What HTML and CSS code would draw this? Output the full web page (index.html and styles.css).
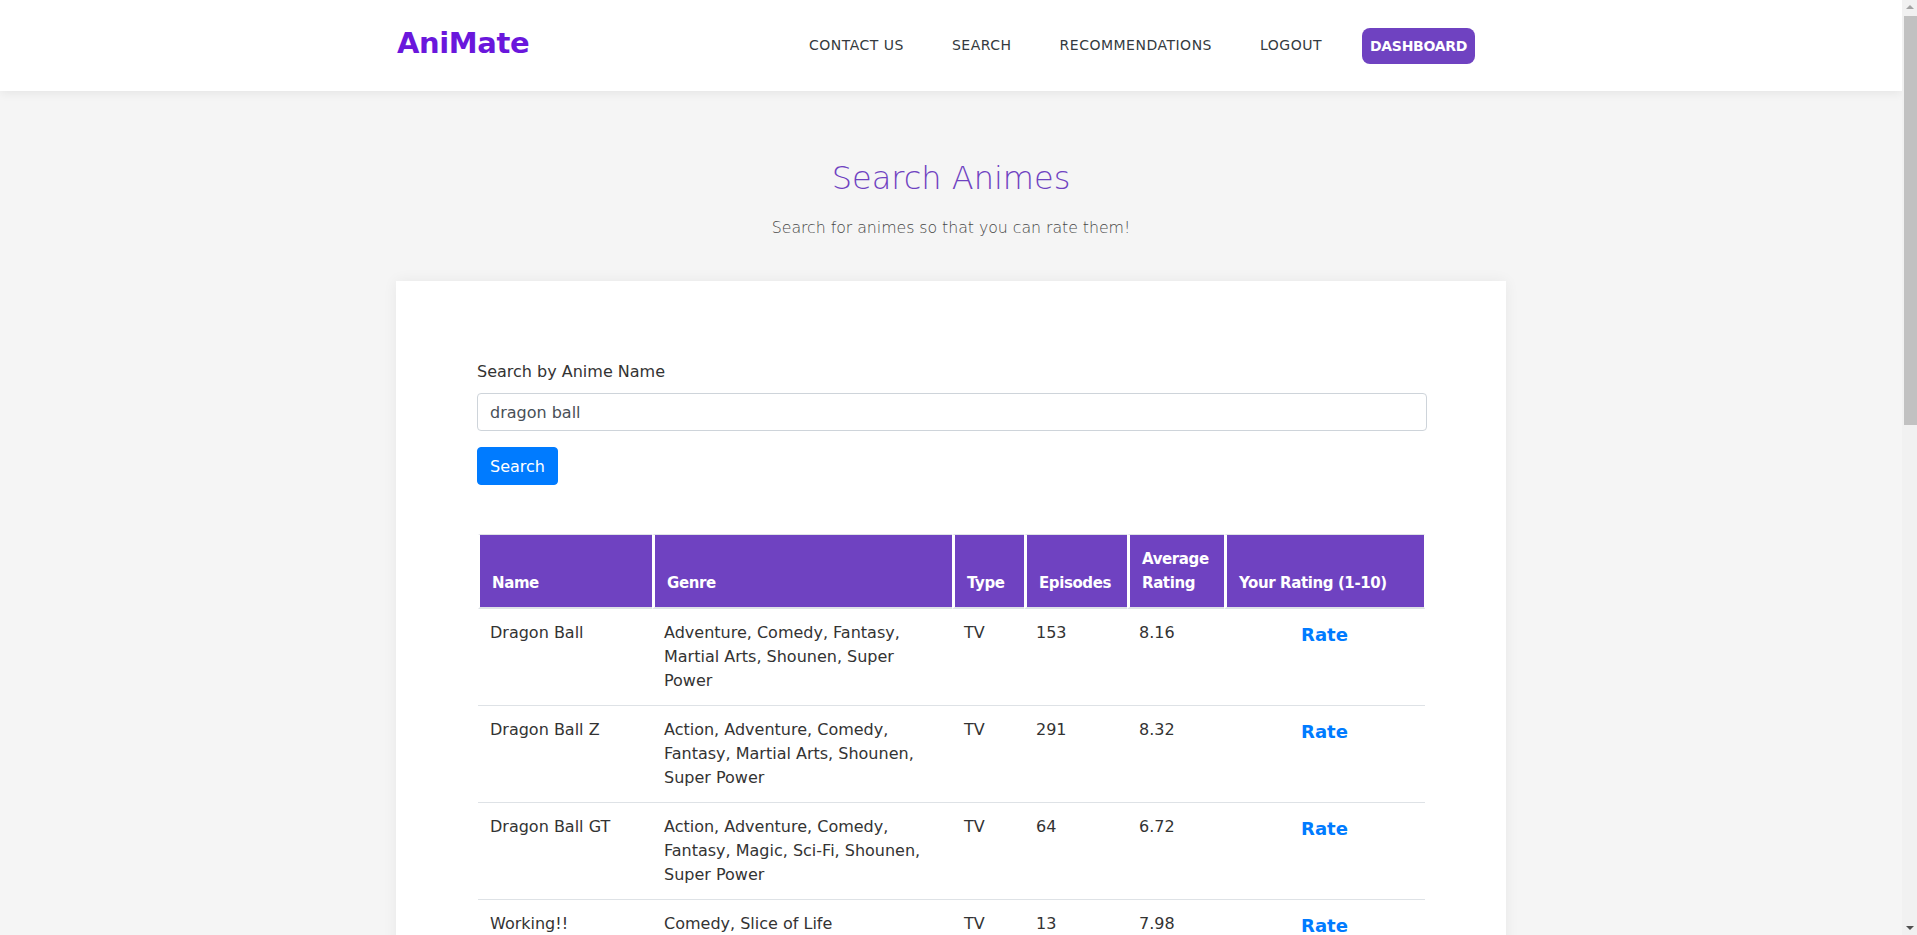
FILE: index.html
```html
<!DOCTYPE html>
<html lang="en">
<head>
<meta charset="utf-8">
<title>AniMate - Search Animes</title>
<link rel="stylesheet" href="styles.css">
</head>
<body>
<header class="topbar">
  <div class="container topbar-inner">
    <a class="brand" href="#">AniMate</a>
    <nav class="nav">
      <a class="nav-link" href="#">CONTACT US</a>
      <a class="nav-link" href="#">SEARCH</a>
      <a class="nav-link" href="#">RECOMMENDATIONS</a>
      <a class="nav-link" href="#">LOGOUT</a>
      <a class="nav-btn" href="#">DASHBOARD</a>
    </nav>
  </div>
</header>

<main class="container">
  <section class="hero">
    <h1 class="hero-title">Search Animes</h1>
    <p class="hero-sub">Search for animes so that you can rate them!</p>
  </section>

  <section class="card">
    <form class="search-form">
      <label class="form-label" for="q">Search by Anime Name</label>
      <input class="form-input" id="q" type="text" value="dragon ball">
      <button class="btn-primary" type="button">Search</button>
    </form>

    <table class="results">
      <thead>
        <tr>
          <th class="w-name">Name</th>
          <th class="w-genre">Genre</th>
          <th class="w-type">Type</th>
          <th class="w-eps">Episodes</th>
          <th class="w-avg">Average Rating</th>
          <th class="w-rate">Your Rating (1-10)</th>
        </tr>
      </thead>
      <tbody>
        <tr><td>Dragon Ball</td><td>Adventure, Comedy, Fantasy, Martial Arts, Shounen, Super Power</td><td>TV</td><td>153</td><td>8.16</td><td class="rate-cell"><a class="rate" href="#">Rate</a></td></tr>
        <tr><td>Dragon Ball Z</td><td>Action, Adventure, Comedy, Fantasy, Martial Arts, Shounen, Super Power</td><td>TV</td><td>291</td><td>8.32</td><td class="rate-cell"><a class="rate" href="#">Rate</a></td></tr>
        <tr><td>Dragon Ball GT</td><td>Action, Adventure, Comedy, Fantasy, Magic, Sci-Fi, Shounen, Super Power</td><td>TV</td><td>64</td><td>6.72</td><td class="rate-cell"><a class="rate" href="#">Rate</a></td></tr>
        <tr><td>Working!!</td><td>Comedy, Slice of Life</td><td>TV</td><td>13</td><td>7.98</td><td class="rate-cell"><a class="rate" href="#">Rate</a></td></tr>
        <tr><td>Dragon Ball Kai</td><td>Action, Adventure, Comedy, Fantasy, Martial Arts, Shounen, Super Power</td><td>TV</td><td>97</td><td>8.01</td><td class="rate-cell"><a class="rate" href="#">Rate</a></td></tr>
        <tr><td>Dragon Ball Super</td><td>Action, Adventure, Comedy, Fantasy, Martial Arts, Shounen, Super Power</td><td>TV</td><td>131</td><td>7.41</td><td class="rate-cell"><a class="rate" href="#">Rate</a></td></tr>
        <tr><td>Dragon Ball Movie 1: Shen Long no Densetsu</td><td>Adventure, Comedy, Fantasy, Martial Arts, Shounen</td><td>Movie</td><td>1</td><td>7.13</td><td class="rate-cell"><a class="rate" href="#">Rate</a></td></tr>
        <tr><td>Dragon Ball Movie 2: Majinjou no Nemuri Hime</td><td>Adventure, Comedy, Fantasy, Martial Arts, Shounen</td><td>Movie</td><td>1</td><td>7.06</td><td class="rate-cell"><a class="rate" href="#">Rate</a></td></tr>
        <tr><td>Dragon Ball Movie 3: Makafushigi Daibouken</td><td>Adventure, Comedy, Fantasy, Martial Arts, Shounen</td><td>Movie</td><td>1</td><td>6.99</td><td class="rate-cell"><a class="rate" href="#">Rate</a></td></tr>
        <tr><td>Dragon Ball Movie 4: Saikyou e no Michi</td><td>Adventure, Comedy, Fantasy, Martial Arts, Shounen</td><td>Movie</td><td>1</td><td>7.29</td><td class="rate-cell"><a class="rate" href="#">Rate</a></td></tr>
        <tr><td>Dragon Ball Z: Kami to Kami</td><td>Action, Adventure, Comedy, Fantasy, Martial Arts, Shounen, Super Power</td><td>Movie</td><td>1</td><td>7.62</td><td class="rate-cell"><a class="rate" href="#">Rate</a></td></tr>
        <tr><td>Dragon Ball Z: Fukkatsu no F</td><td>Action, Adventure, Comedy, Fantasy, Martial Arts, Shounen, Super Power</td><td>Movie</td><td>1</td><td>7.49</td><td class="rate-cell"><a class="rate" href="#">Rate</a></td></tr>
        <tr><td>Dragon Ball Kai (2014)</td><td>Action, Adventure, Comedy, Fantasy, Martial Arts, Shounen, Super Power</td><td>TV</td><td>61</td><td>8.07</td><td class="rate-cell"><a class="rate" href="#">Rate</a></td></tr>
      </tbody>
    </table>
  </section>
</main>

<div class="scrollbar" aria-hidden="true">
  <span class="sb-arrow sb-up"></span>
  <span class="sb-thumb"></span>
  <span class="sb-arrow sb-down"></span>
</div>
</body>
</html>
```

FILE: styles.css
```css
* {
  box-sizing: border-box;
}

html, body {
  margin: 0;
  padding: 0;
}

body {
  background: #f5f5f5;
  font-family: "DejaVu Sans", "Liberation Sans", sans-serif;
  font-size: 16px;
  line-height: 1.5;
  color: #212529;
  padding-right: 15px;
}

a {
  text-decoration: none;
}

.container {
  width: 1110px;
  margin: 0 auto;
}

/* ---------- top bar ---------- */
.topbar {
  background: #ffffff;
  height: 91px;
  box-shadow: 0 2px 10px rgba(0, 0, 0, 0.07);
  position: relative;
  z-index: 2;
}

.topbar-inner {
  height: 100%;
  display: flex;
  align-items: center;
  justify-content: space-between;
}

.brand {
  font-size: 29px;
  font-weight: 700;
  color: #6a17dc;
  letter-spacing: -0.4px;
  margin-left: 1px;
  margin-top: -3px;
}

.nav {
  display: flex;
  align-items: center;
  gap: 48px;
  margin-right: 31px;
}

.nav-link {
  font-size: 14px;
  font-weight: 500;
  color: #343a40;
  letter-spacing: 0.5px;
}

.nav-btn {
  display: block;
  margin-left: -8px;
  height: 36px;
  line-height: 36px;
  padding: 0 8px;
  border-radius: 8px;
  background: #6f42c1;
  color: #ffffff;
  font-size: 14px;
  font-weight: 700;
  letter-spacing: -0.3px;
}

/* ---------- hero ---------- */
.hero {
  padding: 68px 0 41px;
  text-align: center;
}

.hero-title {
  margin: 0 0 19px;
  font-size: 32px;
  line-height: 38px;
  font-weight: 200;
  color: #6f42c1;
}

.hero-sub {
  margin: 0;
  font-size: 15.8px;
  line-height: 24px;
  font-weight: 200;
  color: #474747;
  letter-spacing: -0.05px;
}

/* ---------- card ---------- */
.card {
  background: #ffffff;
  box-shadow: 0 0 14px rgba(0, 0, 0, 0.06);
  padding: 79px 79px 80px 81px;
  margin-bottom: 48px;
}

.search-form {
  display: flex;
  flex-direction: column;
  align-items: flex-start;
}

.form-label {
  font-size: 16px;
  line-height: 24px;
  color: #333333;
  margin-bottom: 9px;
}

.form-input {
  width: 100%;
  height: 38px;
  padding: 6px 12px;
  border: 1px solid #ced4da;
  border-radius: 4px;
  font-family: inherit;
  font-size: 16px;
  color: #495057;
  margin-bottom: 16px;
}

.btn-primary {
  height: 38px;
  padding: 0 12px;
  border: 1px solid #007bff;
  border-radius: 4px;
  background: #007bff;
  color: #ffffff;
  font-family: inherit;
  font-size: 16px;
}

/* ---------- table ---------- */
.results {
  width: 947px;
  margin: 49px 0 0 1px;
  border-collapse: separate;
  border-spacing: 0;
  table-layout: fixed;
}

.results th {
  background: #6f42c1;
  color: #ffffff;
  font-weight: 700;
  font-size: 15px;
  text-align: left;
  vertical-align: bottom;
  line-height: 24px;
  padding: 12px;
  border-top: 1px solid #dee2e6;
  border-bottom: 2px solid #dee2e6;
  border-left: 3px solid #ffffff;
  letter-spacing: -0.4px;
}

.results th:first-child {
  border-left-width: 2px;
}

.results th:last-child {
  border-right: 1px solid #ffffff;
}

.w-name { width: 174px; }
.w-genre { width: 300px; }
.w-type { width: 72px; }
.w-eps { width: 103px; }
.w-avg { width: 97px; }
.w-rate { width: 201px; }

.results td {
  padding: 12px;
  vertical-align: top;
  border-top: 1px solid #dee2e6;
  font-size: 16px;
  line-height: 24px;
  color: #333333;
}

.results tbody tr:first-child td {
  border-top: 0;
}

.rate-cell {
  text-align: center;
}

.rate {
  font-size: 18px;
  line-height: 28.8px;
  font-weight: 700;
  color: #007bff;
}

/* ---------- window scrollbar (drawn over the page edge) ---------- */
.scrollbar {
  position: fixed;
  top: 0;
  right: 0;
  width: 15px;
  height: 100vh;
  background: #f1f1f1;
  z-index: 10;
}

.sb-thumb {
  position: absolute;
  top: 16px;
  left: 2px;
  right: 0;
  height: 409px;
  background: #c1c1c1;
}

.sb-arrow {
  position: absolute;
  left: 4px;
  width: 0;
  height: 0;
  border-left: 4px solid transparent;
  border-right: 4px solid transparent;
}

.sb-up {
  top: 5px;
  border-bottom: 4px solid #a3a3a3;
}

.sb-down {
  bottom: 5px;
  border-top: 4px solid #505050;
}
```
